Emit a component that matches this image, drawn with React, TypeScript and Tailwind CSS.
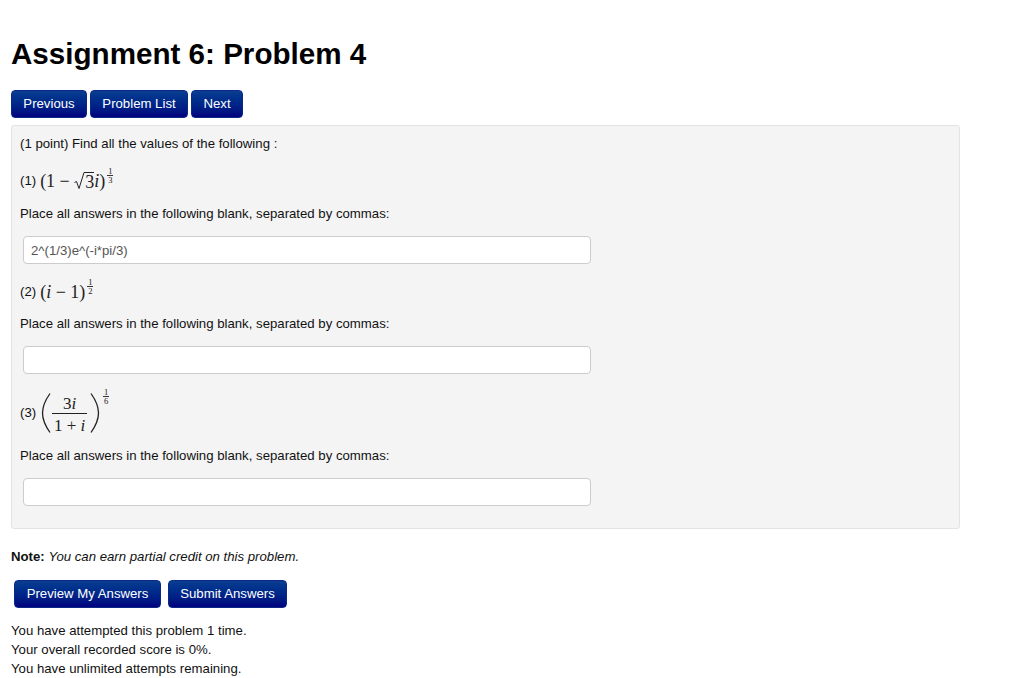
import React from 'react';

const sans = 'font-["Liberation_Sans",Arial,sans-serif]';
const blueButton =
  'h-7 rounded-[4px] border border-[#0a2a86] bg-gradient-to-b from-[#0b3d91] to-[#00007f] pb-px text-[13.2px] leading-none text-white';
const mathText = 'font-["Liberation_Serif",serif] text-[18px] leading-5 text-[#222]';

const Fraction = ({ top, bottom }: { top: string; bottom: string }) => (
  <span className='flex flex-col items-center font-["Liberation_Serif",serif] text-[8.5px] leading-2 text-[#222]'>
    <span>{top}</span>
    <span className="h-px w-[6px] bg-[#333]" />
    <span>{bottom}</span>
  </span>
);

const Math1 = () => (
  <span className="flex items-start">
    <span className={`${mathText} mt-[3px] flex items-start`}>
      <span>(1 −&nbsp;</span>
      <svg width="11" height="18" viewBox="0 0 11 18" fill="none" className="mt-px">
        <path d="M0.5 10.5 L2.5 9.5 L5 16.5 L10 0.5 L11 0.5" stroke="#222" strokeWidth="1" />
      </svg>
      <span className="mt-px border-t border-[#222] leading-[18px]">3</span>
      <span className="italic">i</span>
      <span>)</span>
    </span>
    <span className="-mt-px ml-[2px] flex">
      <Fraction top="1" bottom="3" />
    </span>
  </span>
);

const Math2 = () => (
  <span className="flex items-start">
    <span className={`${mathText} mt-1`}>
      (<span className="italic">i</span>&nbsp;− 1)
    </span>
    <span className="ml-[2px] flex">
      <Fraction top="1" bottom="2" />
    </span>
  </span>
);

const Math3 = () => (
  <span className="flex items-start">
    <svg width="10" height="40" viewBox="0 0 10 40" fill="none" className="mt-[5px]">
      <path d="M9 0.5 C3 9 1.5 15 1.5 20 C1.5 25 3 31 9 39.5" stroke="#222" strokeWidth="1.3" />
    </svg>
    <span className='mt-[5px] ml-px flex w-[35px] flex-col items-center font-["Liberation_Serif",serif] text-[17px] leading-5 text-[#222]'>
      <span className="h-5 pt-px">
        3<span className="italic">i</span>
      </span>
      <span className="h-px w-full bg-[#222]" />
      <span className="h-[19px] whitespace-nowrap pt-[2px]">
        1 + <span className="italic">i</span>
      </span>
    </span>
    <svg width="10" height="40" viewBox="0 0 10 40" fill="none" className="ml-[3px] mt-[5px]">
      <path d="M1 0.5 C7 9 8.5 15 8.5 20 C8.5 25 7 31 1 39.5" stroke="#222" strokeWidth="1.3" />
    </svg>
    <span className="ml-[3px] flex">
      <Fraction top="1" bottom="6" />
    </span>
  </span>
);

const AnswerBlank = ({ value }: { value?: string }) => (
  <input
    readOnly
    value={value ?? ''}
    className="block h-7 w-[568px] rounded-[4px] border border-[#ccc] bg-white px-[7px] text-[13.2px] text-[#555]"
  />
);

const Prompt = () => (
  <p className="text-[13.2px] leading-[18px]">Place all answers in the following blank, separated by commas:</p>
);

export default function App() {
  return (
    <div className={`${sans} min-h-[678px] bg-white pl-[11px] pt-[34px] text-[#111]`}>
      <h1 className="text-[29.6px] font-bold leading-10 text-black">Assignment 6: Problem 4</h1>

      <div className="mt-4 flex gap-[3px]">
        <button className={`${blueButton} w-[76px]`}>Previous</button>
        <button className={`${blueButton} w-[98px]`}>Problem List</button>
        <button className={`${blueButton} w-[52px]`}>Next</button>
      </div>

      <div className="mt-[7px] h-[404px] w-[949px] rounded-[3px] border border-[#e3e3e3] bg-[#f4f4f4] pl-2 pt-[9px]">
        <p className="text-[13.2px] leading-[18px]">(1 point) Find all the values of the following :</p>

        <div className="mt-[15px] flex h-[22px] items-start gap-1 text-[13.2px]">
          <span className="mt-[3px] leading-5">(1)</span>
          <Math1 />
        </div>
        <div className="mt-[15px]">
          <Prompt />
        </div>
        <div className="ml-[3px] mt-[13px]">
          <AnswerBlank value="2^(1/3)e^(-i*pi/3)" />
        </div>

        <div className="mt-[14px] flex h-[22px] items-start gap-1 text-[13.2px]">
          <span className="mt-1 leading-5">(2)</span>
          <Math2 />
        </div>
        <div className="mt-[15px]">
          <Prompt />
        </div>
        <div className="ml-[3px] mt-[13px]">
          <AnswerBlank />
        </div>

        <div className="mt-[14px] flex h-[46px] items-start gap-[5px] text-[13.2px]">
          <span className="mt-4 leading-[18px]">(3)</span>
          <Math3 />
        </div>
        <div className="mt-[13px]">
          <Prompt />
        </div>
        <div className="ml-[3px] mt-[13px]">
          <AnswerBlank />
        </div>
      </div>

      <p className="mt-[19px] text-[13.2px] leading-[18px]">
        <b>Note:</b> <i>You can earn partial credit on this problem.</i>
      </p>

      <div className="ml-[3px] mt-[14px] flex gap-[7px]">
        <button className={`${blueButton} w-[147px]`}>Preview My Answers</button>
        <button className={`${blueButton} w-[119px]`}>Submit Answers</button>
      </div>

      <div className="mt-[13px] text-[13.2px] leading-[19px]">
        <p>You have attempted this problem 1 time.</p>
        <p>Your overall recorded score is 0%.</p>
        <p>You have unlimited attempts remaining.</p>
      </div>
    </div>
  );
}
